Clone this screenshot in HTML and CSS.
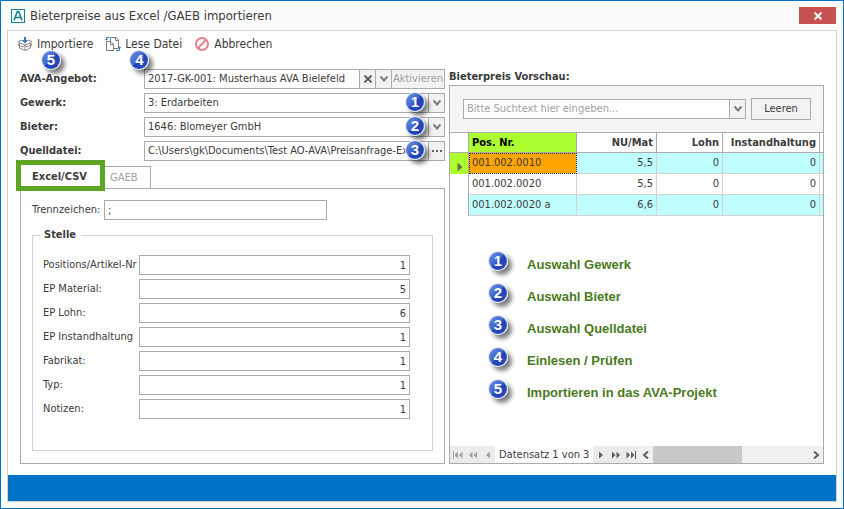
FILE: index.html
```
<!DOCTYPE html>
<html lang="de">
<head>
    <meta charset="UTF-8">
    <title>Bieterpreise aus Excel /GAEB importieren</title>
    <link rel="stylesheet" href="styles.css">
</head>
<body>
    <svg class="defs" width="0" height="0">
        <defs>
            <linearGradient id="ball" x1="0" y1="0" x2="1" y2="1">
                <stop offset="0" stop-color="#6f8fe0"/>
                <stop offset="0.45" stop-color="#4268cf"/>
                <stop offset="0.52" stop-color="#2447b8"/>
                <stop offset="1" stop-color="#2445b4"/>
            </linearGradient>
            <symbol id="circle" viewBox="0 0 22 22">
                <circle cx="11" cy="11" r="11" fill="#dfe5f5"/>
                <circle cx="11" cy="11" r="9.8" fill="url(#ball)"/>
            </symbol>
            <symbol id="chevron" viewBox="0 0 8 8">
                <path d="M0.5 1.5 L4 5.5 L7.5 1.5" fill="none" stroke="#7d7d7d" stroke-width="2"/>
            </symbol>
        </defs>
    </svg>

    <div class="window">
        <header class="titlebar">
            <svg class="logo" viewBox="0 0 14 14">
                <rect x="0.5" y="0.5" width="13" height="13" fill="#fff" stroke="#12828c"/>
                <path d="M3 11.5 L6.3 2.5 H7.7 L11 11.5 M4.2 8.5 H9.8" fill="none" stroke="#12828c" stroke-width="1.6"/>
            </svg>
            <h1>Bieterpreise aus Excel /GAEB importieren</h1>
            <button class="close" aria-label="Schließen">
                <svg viewBox="0 0 10 8"><path d="M1.5 0.5 L8.5 7.5 M8.5 0.5 L1.5 7.5" stroke="#fff" stroke-width="2"/></svg>
            </button>
        </header>

        <div class="panel">
            <nav class="toolbar">
                <button class="tool">
                    <svg viewBox="0 0 16 16">
                        <g fill="none" stroke="#8a8a8a">
                            <path d="M2.5 7 L8 9 L13.5 7 V12 L8 14.5 L2.5 12 Z M8 9 V14.5"/>
                            <path d="M2.5 7 L1 9 L6 11 L8 9 L10 11 L15 9 L13.5 7 M2.5 7 L1 5.5 L4.5 4.2 M13.5 7 L15 5.5 L11.5 4.2"/>
                        </g>
                        <path d="M7 1 H9 V4 H11.5 L8 7.5 L4.5 4 H7 Z" fill="#3b7cb8"/>
                    </svg>
                    Importiere
                    <span class="badge"><svg><use href="#circle"/></svg><b>5</b></span>
                </button>
                <button class="tool">
                    <svg viewBox="0 0 16 16">
                        <g fill="#fff" stroke="#7d7d7d">
                            <path d="M5.5 1.5 H11 L13.5 4 V12.5 H5.5 Z M10.5 1.5 V4.5 H13.5"/>
                            <path d="M1.5 5.5 H6 L8.5 8 V14.5 H1.5 Z M5.5 5.5 V8.5 H8.5"/>
                        </g>
                        <path d="M4.5 1.5 H1.5 V4 M0 2.7 L1.5 4.3 L3 2.7 M11 14.5 H14.5 V11 M13 12.3 L14.5 10.7 L16 12.3" fill="none" stroke="#3b7cb8"/>
                    </svg>
                    Lese Datei
                    <span class="badge"><svg><use href="#circle"/></svg><b>4</b></span>
                </button>
                <button class="tool">
                    <svg viewBox="0 0 16 16"><g fill="none" stroke="#e5808c" stroke-width="2"><circle cx="8" cy="8" r="6"/><path d="M12.2 3.8 L3.8 12.2"/></g></svg>
                    Abbrechen
                </button>
            </nav>

            <main class="content">
                <section class="source">
                    <div class="row">
                        <label for="angebot">AVA-Angebot:</label>
                        <div class="field">
                            <input type="text" id="angebot" value="2017-GK-001: Musterhaus AVA Bielefeld">
                            <button class="mini" aria-label="Löschen"><svg viewBox="0 0 8 8"><path d="M0.5 0.5 L7.5 7.5 M7.5 0.5 L0.5 7.5" stroke="#606060" stroke-width="2"/></svg></button>
                            <button class="mini" aria-label="Auswählen"><svg><use href="#chevron"/></svg></button>
                            <button class="activate" disabled>Aktivieren</button>
                        </div>
                    </div>
                    <div class="row">
                        <label for="gewerk">Gewerk:</label>
                        <div class="field">
                            <select id="gewerk"><option>3: Erdarbeiten</option></select>
                            <span class="mini"><svg><use href="#chevron"/></svg></span>
                            <span class="badge"><svg><use href="#circle"/></svg><b>1</b></span>
                        </div>
                    </div>
                    <div class="row">
                        <label for="bieter">Bieter:</label>
                        <div class="field">
                            <select id="bieter"><option>1646: Blomeyer GmbH</option></select>
                            <span class="mini"><svg><use href="#chevron"/></svg></span>
                            <span class="badge"><svg><use href="#circle"/></svg><b>2</b></span>
                        </div>
                    </div>
                    <div class="row">
                        <label for="quelle">Quelldatei:</label>
                        <div class="field">
                            <input type="text" id="quelle" value="C:\Users\gk\Documents\Test AO-AVA\Preisanfrage-Excel.csv">
                            <button class="mini" aria-label="Durchsuchen"><svg class="dots" viewBox="0 0 10 8"><path d="M0 3 H2 V5 H0 Z M4 3 H6 V5 H4 Z M8 3 H10 V5 H8 Z" fill="#606060"/></svg></button>
                            <span class="badge"><svg><use href="#circle"/></svg><b>3</b></span>
                        </div>
                    </div>

                    <div class="tabs">
                        <button class="tab active">Excel/CSV</button>
                        <button class="tab">GAEB</button>
                    </div>
                    <div class="page">
                        <div class="separator">
                            <label for="trenn">Trennzeichen:</label>
                            <input type="text" id="trenn" value=";">
                        </div>
                        <fieldset>
                            <legend>Stelle</legend>
                            <div class="positions">
                                <label for="pos">Positions/Artikel-Nr</label><input type="text" id="pos" value="1">
                                <label for="material">EP Material:</label><input type="text" id="material" value="5">
                                <label for="lohn">EP Lohn:</label><input type="text" id="lohn" value="6">
                                <label for="instand">EP Instandhaltung</label><input type="text" id="instand" value="1">
                                <label for="fabrikat">Fabrikat:</label><input type="text" id="fabrikat" value="1">
                                <label for="typ">Typ:</label><input type="text" id="typ" value="1">
                                <label for="notizen">Notizen:</label><input type="text" id="notizen" value="1">
                            </div>
                        </fieldset>
                    </div>
                </section>

                <section class="preview">
                    <h2>Bieterpreis Vorschau:</h2>
                    <div class="grid">
                        <div class="search">
                            <div class="field">
                                <input type="text" aria-label="Suche" placeholder="Bitte Suchtext hier eingeben...">
                                <button class="mini" aria-label="Verlauf"><svg><use href="#chevron"/></svg></button>
                            </div>
                            <button class="clear">Leeren</button>
                        </div>
                        <table>
                            <colgroup>
                                <col class="c-mark"><col><col class="c-mat"><col class="c-lohn"><col class="c-inst"><col class="c-rest">
                            </colgroup>
                            <thead>
                                <tr><th></th><th class="sorted">Pos. Nr.</th><th>NU/Mat</th><th>Lohn</th><th>Instandhaltung</th><th></th></tr>
                            </thead>
                            <tbody>
                                <tr class="odd current">
                                    <td><svg viewBox="0 0 6 10"><path d="M0.5 0.5 L5.5 5 L0.5 9.5 Z" fill="#5f6f4a"/></svg></td>
                                    <td>001.002.0010</td><td>5,5</td><td>0</td><td>0</td><td></td>
                                </tr>
                                <tr><td></td><td>001.002.0020</td><td>5,5</td><td>0</td><td>0</td><td></td></tr>
                                <tr class="odd"><td></td><td>001.002.0020 a</td><td>6,6</td><td>0</td><td>0</td><td></td></tr>
                            </tbody>
                        </table>

                        <ol class="steps">
                            <li><span class="badge"><svg><use href="#circle"/></svg><b>1</b></span>Auswahl Gewerk</li>
                            <li><span class="badge"><svg><use href="#circle"/></svg><b>2</b></span>Auswahl Bieter</li>
                            <li><span class="badge"><svg><use href="#circle"/></svg><b>3</b></span>Auswahl Quelldatei</li>
                            <li><span class="badge"><svg><use href="#circle"/></svg><b>4</b></span>Einlesen / Prüfen</li>
                            <li><span class="badge"><svg><use href="#circle"/></svg><b>5</b></span>Importieren in das AVA-Projekt</li>
                        </ol>

                        <div class="navigator">
                            <button class="dim" aria-label="Erster"><svg viewBox="0 0 10 8"><path d="M0 0 H1 V8 H0 Z M5 0.5 V7.5 L1.5 4 Z M9.5 0.5 V7.5 L6 4 Z"/></svg></button>
                            <button class="dim" aria-label="Seite zurück"><svg viewBox="0 0 10 8"><path d="M4.5 0.5 V7.5 L1 4 Z M9 0.5 V7.5 L5.5 4 Z"/></svg></button>
                            <button class="dim" aria-label="Zurück"><svg viewBox="0 0 10 8"><path d="M7 0.5 V7.5 L3 4 Z"/></svg></button>
                            <span class="record">Datensatz 1 von 3</span>
                            <button aria-label="Weiter"><svg viewBox="0 0 10 8"><path d="M3 0.5 V7.5 L7 4 Z"/></svg></button>
                            <button aria-label="Seite vor"><svg viewBox="0 0 10 8"><path d="M1 0.5 V7.5 L4.5 4 Z M5.5 0.5 V7.5 L9 4 Z"/></svg></button>
                            <button aria-label="Letzter"><svg viewBox="0 0 10 8"><path d="M9 0 H10 V8 H9 Z M0.5 0.5 V7.5 L4 4 Z M5 0.5 V7.5 L8.5 4 Z"/></svg></button>
                            <div class="scrollbar">
                                <button aria-label="Nach links"><svg viewBox="0 0 10 8"><path class="line" d="M7 0.5 L3 4 L7 7.5"/></svg></button>
                                <div class="track"><div class="thumb"></div></div>
                                <button aria-label="Nach rechts"><svg viewBox="0 0 10 8"><path class="line" d="M3 0.5 L7 4 L3 7.5"/></svg></button>
                            </div>
                        </div>
                    </div>
                </section>
            </main>

            <footer class="statusbar"></footer>
        </div>
    </div>
</body>
</html>
```

FILE: styles.css
```
* {
    box-sizing: border-box;
}
body {
    margin: 0;
    font-family: 'DejaVu Sans Condensed', 'DejaVu Sans', Tahoma, sans-serif;
    font-size: 11px;
    line-height: 14px;
    color: #3b3b3b;
}
button, input, select {
    font: inherit;
    color: inherit;
    margin: 0;
    padding: 0;
    border: 1px solid #ababab;
    border-radius: 0;
    background: #fff;
}
button {
    background: #f2f2f2;
}
svg {
    display: block;
    flex: none;
}
.defs {
    position: absolute;
}
.window {
    display: flex;
    flex-direction: column;
    min-height: 100vh;
    padding: 0 6px 6px;
    border: 1px solid #0072c6;
    background: #fcfcfc;
}

/* Titelleiste */
.titlebar {
    display: flex;
    align-items: center;
    height: 29px;
    padding: 0 1px 0 4px;
}
.logo {
    width: 14px;
    height: 14px;
}
h1 {
    flex: 1;
    margin: 0 0 0 5px;
    font-size: 13px;
    line-height: 18px;
    font-weight: normal;
}
.close {
    display: grid;
    place-items: center;
    width: 37px;
    height: 17px;
    border: 0;
    background: #c75050;
}
.close svg {
    width: 10px;
    height: 8px;
}

.panel {
    flex: 1;
    display: flex;
    flex-direction: column;
    border: 1px solid #d2d2d2;
    background: #fff;
}

/* Werkzeugleiste */
.toolbar {
    display: flex;
    gap: 12px;
    height: 38px;
    padding: 4px 9px;
}
.tool {
    position: relative;
    display: flex;
    align-items: center;
    gap: 4px;
    height: 18px;
    border: 0;
    background: none;
    font-size: 12px;
}
.tool > svg {
    width: 16px;
    height: 16px;
}

/* blaue Nummern */
.badge {
    display: grid;
    place-items: center;
    width: 20px;
    height: 20px;
    border-radius: 50%;
    box-shadow: 4px 4px 4px rgba(0, 0, 0, 0.5);
}
.badge > * {
    grid-area: 1 / 1;
}
.badge svg {
    width: 20px;
    height: 20px;
}
.badge b {
    font: bold 15px/20px 'Liberation Sans', Arial, sans-serif;
    color: #fff;
}
.tool .badge {
    position: absolute;
    left: 24px;
    top: 15px;
    z-index: 1;
}
.field .badge {
    position: absolute;
    right: 20px;
    top: -1px;
    z-index: 1;
}

.content {
    flex: 1;
    display: grid;
    grid-template-columns: 425fr 375fr;
    gap: 4px;
    padding: 0 12px 11px;
}
.source, .preview {
    display: flex;
    flex-direction: column;
    min-width: 0;
}

/* Formular links */
.row {
    display: flex;
    align-items: center;
    margin-bottom: 4px;
}
.row label {
    width: 124px;
    line-height: 16px;
    font-weight: bold;
}
.field {
    position: relative;
    display: flex;
    flex: 1;
    height: 20px;
    min-width: 0;
}
.field input, .field select {
    flex: 1;
    min-width: 0;
    padding: 0 3px;
    appearance: none;
}
.mini {
    display: grid;
    place-items: center;
    width: 17px;
    margin-left: -1px;
    border: 1px solid #ababab;
    background: #f2f2f2;
}
span.mini {
    pointer-events: none;
}
.mini svg {
    width: 8px;
    height: 8px;
}
.mini .dots {
    width: 10px;
}
.activate {
    width: 54px;
    margin-left: -1px;
    color: #a0a0a0;
}

.tabs {
    display: flex;
    align-items: flex-end;
    height: 23px;
}
.tab {
    width: 48px;
    height: 22px;
    margin-left: -1px;
    padding: 0 0 0 6px;
    border-bottom: 0;
    background: #fff;
    color: #a0a0a0;
    text-align: left;
}
.tab.active {
    position: relative;
    width: 84px;
    margin-left: 0;
    padding: 0 0 0 12px;
    border: 0;
    font-weight: bold;
    color: #3b3b3b;
}
.tab.active::after {
    content: '';
    position: absolute;
    inset: -6px -1px -3px -4px;
    border: 5px solid #5fa524;
}
.page {
    flex: 1;
    display: flex;
    flex-direction: column;
    padding: 11px 11px 12px;
    border: 1px solid #ababab;
}
.separator {
    display: flex;
    align-items: center;
    margin-bottom: 8px;
}
.separator label {
    width: 72px;
}
.separator input {
    width: 223px;
    height: 20px;
    padding: 0 3px;
}
fieldset {
    flex: 1;
    margin: 0;
    padding: 13px 22px 0 10px;
    border: 1px solid #d2d2d2;
}
legend {
    margin-left: -3px;
    padding: 0 5px 0 4px;
    font-weight: bold;
}
.positions {
    display: grid;
    grid-template-columns: 96px 1fr;
    align-items: center;
    row-gap: 4px;
}
.positions label {
    white-space: nowrap;
}
.positions input {
    height: 20px;
    min-width: 0;
    padding: 0 3px;
    text-align: right;
}

/* Vorschau rechts */
h2 {
    margin: 0;
    font-size: 11px;
    line-height: 16px;
}
.grid {
    flex: 1;
    display: flex;
    flex-direction: column;
    border: 1px solid #ababab;
}
.search {
    display: flex;
    align-items: center;
    gap: 5px;
    height: 47px;
    padding: 0 12px 0 13px;
    border-bottom: 1px solid #ababab;
    background: #f5f5f5;
}
.search ::placeholder {
    color: #a0a0a0;
    opacity: 1;
}
.clear {
    width: 60px;
    height: 22px;
}
table {
    width: 100%;
    table-layout: fixed;
    border-collapse: separate;
    border-spacing: 0;
}
.c-mark {
    width: 19px;
}
.c-mat {
    width: 80px;
}
.c-lohn {
    width: 66px;
}
.c-inst {
    width: 97px;
}
.c-rest {
    width: 3px;
}
th, td {
    height: 21px;
    padding: 0 3px;
    border-right: 1px solid #d2d2d2;
    border-bottom: 1px solid #d2d2d2;
    text-align: right;
    white-space: nowrap;
}
th {
    height: 20px;
    border-color: #ababab;
}
th:nth-child(2), td:nth-child(2) {
    text-align: left;
}
th:first-child, td:first-child {
    border-right-color: #ababab;
}
td:first-child {
    border-bottom: 0;
}
th:last-child, td:last-child {
    padding: 0;
    border-right: 0;
}
.sorted {
    background: #adff2f;
    color: #000;
}
.odd td:not(:first-child) {
    background: #c0ffff;
}
.current td:first-child {
    padding: 7px 0 0 7px;
    background: #adff2f;
}
.current td:first-child svg {
    width: 6px;
    height: 10px;
}
.odd.current td:nth-child(2) {
    background: #ffa500;
    outline: 1px dotted #303030;
    outline-offset: -1px;
}

.steps {
    flex: 1;
    margin: 0;
    padding: 33px 0 0 38px;
    list-style: none;
    font: bold 13px/32px 'Liberation Sans', Arial, sans-serif;
    color: #4a7a22;
}
.steps li {
    display: flex;
    gap: 19px;
    height: 32px;
}
.steps .badge {
    margin-top: 2px;
}

.navigator {
    display: flex;
    height: 17px;
    background: #ebebeb;
}
.navigator button {
    display: grid;
    place-items: center;
    width: 15px;
    border: 0;
    background: none;
}
.navigator svg {
    width: 10px;
    height: 8px;
    fill: #606060;
}
.navigator .dim svg {
    fill: #a0a0a0;
}
.navigator .line {
    fill: none;
    stroke: #606060;
    stroke-width: 2;
}
.record {
    padding: 0 4px;
    line-height: 18px;
    background: #fff;
    white-space: nowrap;
}
.scrollbar {
    flex: 1;
    display: flex;
    background: #f0f0f0;
}
.track {
    flex: 1;
}
.thumb {
    width: 57%;
    height: 100%;
    background: #c9c9c9;
}

.statusbar {
    height: 26px;
    background: #0072c6;
}
```
